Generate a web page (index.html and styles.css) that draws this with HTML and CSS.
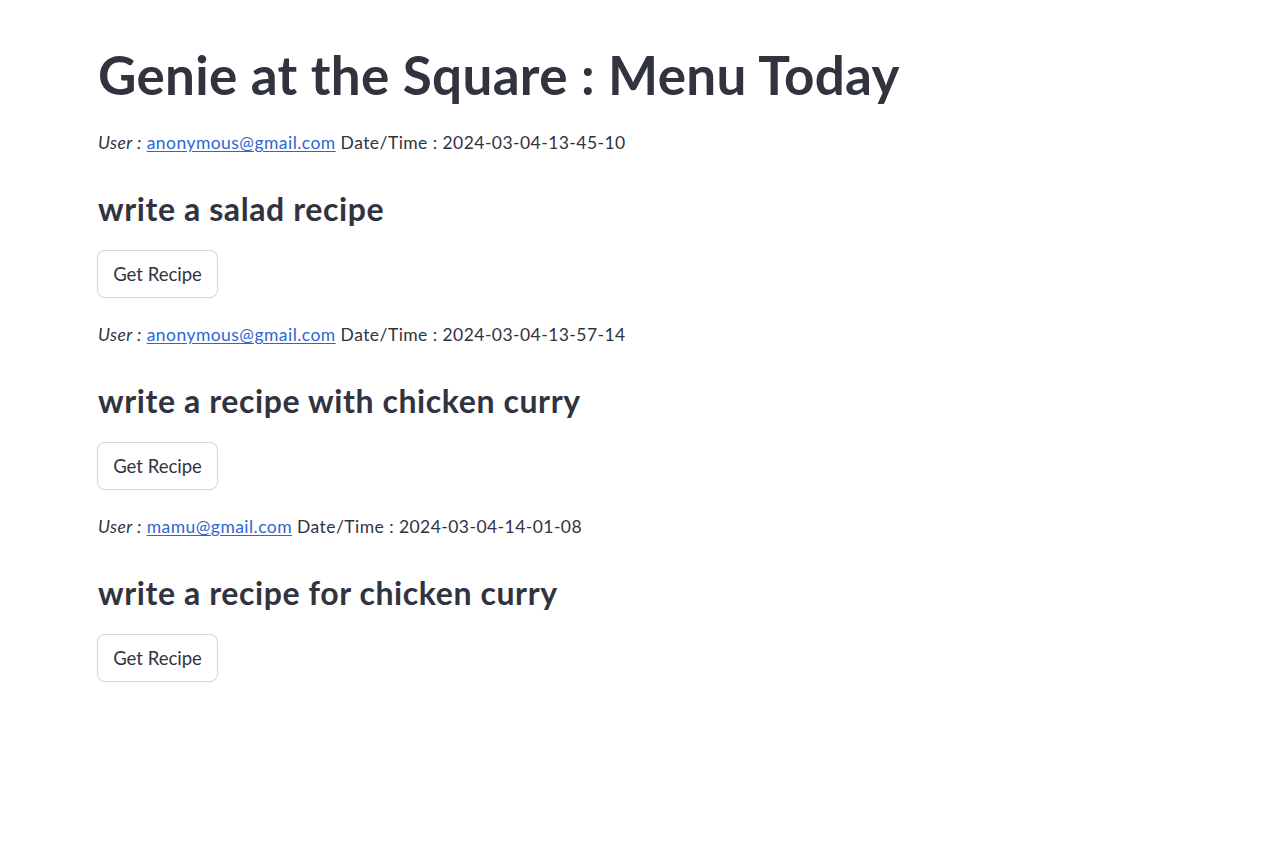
FILE: index.html
```html
<!DOCTYPE html>
<html lang="en">
<head>
<meta charset="utf-8">
<title>Genie at the Square : Menu Today</title>
<link rel="stylesheet" href="styles.css">
</head>
<body>
<main class="main">
  <h1 class="title">Genie at the Square : Menu Today</h1>

  <section class="entry">
    <p class="meta"><em>User :</em> <a href="#">anonymous@gmail.com</a> Date/Time : 2024-03-04-13-45-10</p>
    <h3 class="prompt">write a salad recipe</h3>
    <button class="btn" type="button">Get Recipe</button>
  </section>

  <section class="entry">
    <p class="meta"><em>User :</em> <a href="#">anonymous@gmail.com</a> Date/Time : 2024-03-04-13-57-14</p>
    <h3 class="prompt">write a recipe with chicken curry</h3>
    <button class="btn" type="button">Get Recipe</button>
  </section>

  <section class="entry">
    <p class="meta"><em>User :</em> <a href="#">mamu@gmail.com</a> Date/Time : 2024-03-04-14-01-08</p>
    <h3 class="prompt">write a recipe for chicken curry</h3>
    <button class="btn" type="button">Get Recipe</button>
  </section>
</main>
</body>
</html>
```

FILE: styles.css
```css
html, body {
  margin: 0;
  padding: 0;
  background: #ffffff;
}

body {
  font-family: "Source Sans Pro", Lato, "Noto Sans", sans-serif;
  color: #31333f;
}

.main {
  padding: 48px 0 0 98px;
  display: flex;
  flex-direction: column;
}

.title {
  margin: 0;
  font-size: 53px;
  line-height: 53px;
  font-weight: 700;
  color: #31333f;
  letter-spacing: 0.3px;
}

.entry {
  display: flex;
  flex-direction: column;
  align-items: flex-start;
  margin-top: 30px;
}

.entry + .entry {
  margin-top: 25px;
}

.meta {
  margin: 0;
  font-size: 17.5px;
  line-height: 24px;
  letter-spacing: 0.45px;
}

.meta em {
  font-style: italic;
}

.meta a {
  color: #2e67cf;
  text-decoration: underline;
  text-underline-offset: 2px;
}

.prompt {
  margin: 37px 0 0 0;
  font-size: 32px;
  line-height: 34px;
  font-weight: 700;
  letter-spacing: 0.6px;
}

.btn {
  margin: 24px 0 0 -1px;
  height: 48px;
  width: 121px;
  padding: 0;
  font-family: inherit;
  font-size: 18.5px;
  color: #31333f;
  background: #ffffff;
  border: 1px solid rgba(49, 51, 63, 0.2);
  border-radius: 8px;
  cursor: pointer;
}
```
